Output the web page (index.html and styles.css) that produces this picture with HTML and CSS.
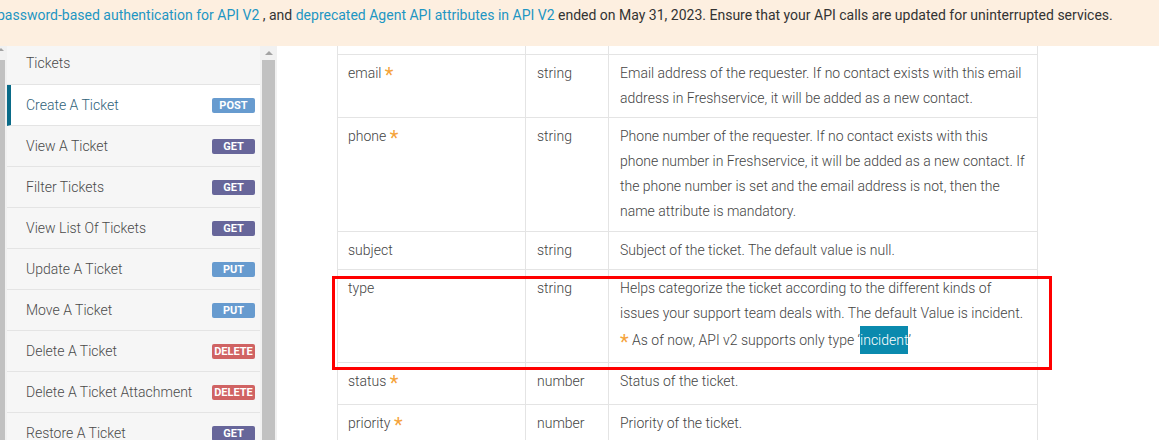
FILE: index.html
```html
<!DOCTYPE html>
<html>
<head>
<meta charset="utf-8">
<link rel="stylesheet" href="styles.css">
</head>
<body>
<div class="banner"><p class="banner-text"><a class="link">password-based authentication for API V2</a> , and <a class="link">deprecated Agent API attributes in API V2</a> ended on May 31, 2023. Ensure that your API calls are updated for uninterrupted services.</p></div>
<div class="layout">
  <div class="outer-scroll">
    <div class="arrow-left"></div>
    <div class="thumb-left"></div>
  </div>
  <nav class="sidebar">
    <div class="item item-head">Tickets</div>
    <div class="item active"><span>Create A Ticket</span><span class="badge post">POST</span></div>
    <div class="item"><span>View A Ticket</span><span class="badge get">GET</span></div>
    <div class="item"><span>Filter Tickets</span><span class="badge get">GET</span></div>
    <div class="item"><span>View List Of Tickets</span><span class="badge get">GET</span></div>
    <div class="item"><span>Update A Ticket</span><span class="badge put">PUT</span></div>
    <div class="item"><span>Move A Ticket</span><span class="badge put">PUT</span></div>
    <div class="item"><span>Delete A Ticket</span><span class="badge del">DELETE</span></div>
    <div class="item"><span>Delete A Ticket Attachment</span><span class="badge del">DELETE</span></div>
    <div class="item"><span>Restore A Ticket</span><span class="badge get">GET</span></div>
  </nav>
  <div class="side-scroll">
    <div class="arrow-up"></div>
    <div class="thumb"></div>
  </div>
  <main class="main">
    <table class="attrs">
      <colgroup><col class="c1"><col class="c2"><col class="c3"></colgroup>
      <tr class="spacer"><td></td><td></td><td></td></tr>
      <tr><td>email <span class="req">*</span></td><td>string</td><td>Email address of the requester. If no contact exists with this email address in Freshservice, it will be added as a new contact.</td></tr>
      <tr><td>phone <span class="req">*</span></td><td>string</td><td class="tall">Phone number of the requester. If no contact exists with this phone number in Freshservice, it will be added as a new contact. If the phone number is set and the email address is not, then the name attribute is mandatory.</td></tr>
      <tr><td>subject</td><td>string</td><td>Subject of the ticket. The default value is null.</td></tr>
      <tr><td>type</td><td>string</td><td>Helps categorize the ticket according to the different kinds of issues your support team deals with. The default Value is incident.<div class="note"><span class="star">*</span> As of now, API v2 supports only type ‘<span class="hl">incident</span>’</div></td></tr>
      <tr><td>status <span class="req">*</span></td><td>number</td><td>Status of the ticket.</td></tr>
      <tr><td>priority <span class="req">*</span></td><td>number</td><td>Priority of the ticket.</td></tr>
    </table>
    <div class="redbox"></div>
  </main>
</div>
</body>
</html>
```

FILE: styles.css
```css
* { box-sizing: border-box; }
html, body { margin: 0; padding: 0; height: 440px; overflow: hidden; background: #fff; }
body { font-family: Roboto, "Liberation Sans", sans-serif; font-size: 14px; color: #555; }

.banner { height: 46px; background: #fdefe0; overflow: hidden; }
.banner-text { margin: 0 0 0 -3px; padding-top: 5px; line-height: 20px; color: #333; white-space: nowrap; }
.link { color: #1e96c3; text-decoration: none; }

.layout { display: flex; height: 394px; }

.outer-scroll { width: 7px; background: #f1f1f1; flex: none; }
.arrow-left { width: 0; height: 0; border-left: 3px solid transparent; border-right: 3px solid transparent; border-bottom: 3px solid #a3a3a3; margin: 2px 0 0 -2px; }
.thumb-left { width: 5px; height: 380px; background: #c1c1c1; margin-top: 9px; }

.sidebar { width: 253px; flex: none; background: #f6f6f6; overflow: hidden; font-weight: 300; }
.item { display: flex; justify-content: space-between; align-items: center; height: 41px; padding: 0 5px 0 19px; border-bottom: 1px solid #e4e4e4; color: #4a4a4a; }
.item-head { height: 39px; padding-bottom: 5px; }
.item.active { background: #fff; border-left: 4px solid #0a6b88; padding-left: 15px; color: #2f6279; }

.badge { width: 43px; height: 15px; border-radius: 2px; color: #fff; font-size: 11px; font-weight: 700; line-height: 15px; text-align: center; }
.post, .put { background: #679bcf; }
.get { background: #67669a; }
.del { background: #d06363; }

.side-scroll { width: 17px; flex: none; background: #f1f1f1; padding: 0 2px; }
.arrow-up { width: 0; height: 0; margin: 5px auto 0; border-left: 4px solid transparent; border-right: 4px solid transparent; border-bottom: 4px solid #a3a3a3; }
.thumb { height: 390px; margin-top: 5px; background: #c1c1c1; }

.main { flex: 1; position: relative; overflow: hidden; }

.attrs { border-collapse: collapse; width: 700px; margin-left: 60px; table-layout: fixed; font-weight: 300; color: #444; }
.c1 { width: 188px; }
.c2 { width: 83px; }
.c3 { width: 429px; }
.attrs td { border: 1px solid #e4e4e4; padding: 6px 11px; line-height: 25px; vertical-align: top; }
.attrs td:first-child { padding-left: 10px; }
.attrs td.tall { padding-bottom: 7px; }
.attrs .spacer td { border-top: none; height: 8px; padding: 0; line-height: 0; }

.req { display: inline-block; vertical-align: top; color: #f5a33a; font-size: 20px; font-weight: 400; line-height: 29px; }
.note { line-height: 28px; }
.star { color: #f5a33a; font-size: 20px; font-weight: 400; vertical-align: -4px; }
.hl { background: #0a8aae; color: #fff; display: inline-block; line-height: 28px; }

.redbox { position: absolute; left: 55px; top: 230px; width: 720px; height: 94px; border: 3px solid #f00; }
```
